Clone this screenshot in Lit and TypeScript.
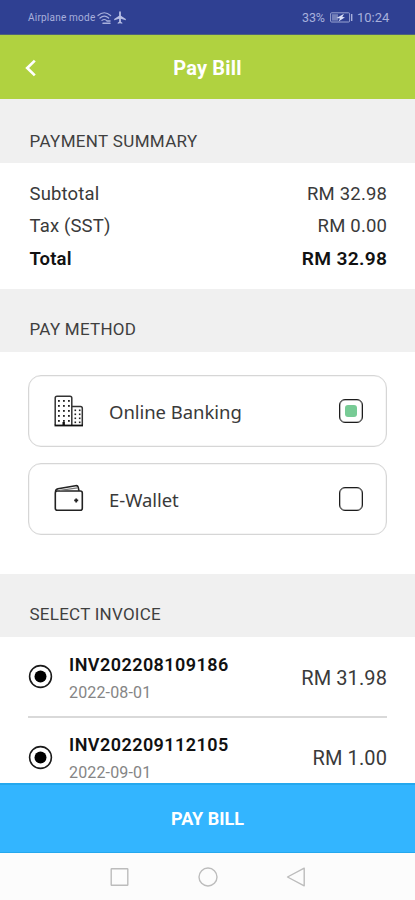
import { LitElement, html, svg, css } from "lit";

class AppRoot extends LitElement {
  static styles = css`
    :host { display: flex; flex-direction: column; height: 900px; width: 415px; overflow: hidden; background: #fff; font-family: Roboto, "Liberation Sans", sans-serif; color: #3a3a3a; }
    * { box-sizing: border-box; }
    svg { display: block; flex: none; fill: none; }
    .status { height: 35px; flex: none; background: #2f4092; color: #a8b0dc; display: flex; align-items: center; padding: 1px 26px 0 28px; border-bottom: 1px solid #4e6378; }
    .mode { font-size: 10px; letter-spacing: 0.22px; width: 69px; white-space: nowrap; }
    .plane { margin-left: 2px; }
    .pct { margin-left: auto; font-size: 12.5px; width: 25px; letter-spacing: -0.1px; }
    .batt { margin: 0 4px 0 3px; }
    .clock { font-size: 13px; width: 32px; white-space: nowrap; }
    .bar { height: 64px; flex: none; background: #b0d240; display: grid; grid-template-columns: 60px 1fr 60px; align-items: center; padding-top: 2px; }
    .back { margin-left: 24px; }
    .title { color: #fff; font-size: 20px; font-weight: 700; text-align: center; letter-spacing: 0.2px; }
    .head { height: 64px; flex: none; background: #f0f0f0; padding: 32px 29.5px 0; font-size: 17px; line-height: 20px; color: #3f3f3f; letter-spacing: 0.35px; }
    .head.short { height: 63px; padding-top: 30px; letter-spacing: 0.25px; }
    .sum { height: 126px; flex: none; padding: 15px 28px 0 29.5px; }
    .line { display: flex; justify-content: space-between; height: 32.3px; line-height: 32px; font-size: 18.5px; }
    .ls { letter-spacing: 0.15px; }
    .val { letter-spacing: 0.2px; margin-right: -0.2px; }
    .line.total { font-weight: 600; color: #111; }
    .total .val { letter-spacing: 0.3px; font-size: 19.2px; }
    .methods { height: 222px; flex: none; padding: 23px 28px 0 28px; display: flex; flex-direction: column; gap: 16px; }
    .card { height: 72px; border: 1.5px solid #d6d6d6; box-shadow: inset 0 0 0 0.5px #ececec; border-radius: 13px; display: flex; align-items: center; padding: 0 23px 0 25px; }
    .name { font-family: "Noto Sans", sans-serif; font-size: 18.5px; line-height: 26px; margin: 1px 0 0 25px; flex: 1; letter-spacing: -0.05px; }
    .box { width: 24px; height: 24px; border: 1.5px solid #1d1d1d; box-shadow: inset 0 0 0 0.5px #777; border-radius: 6px; display: flex; align-items: center; justify-content: center; }
    .mark { width: 12px; height: 12px; border-radius: 3px; background: #77cb95; }
    .list { flex: 1; min-height: 0; overflow: hidden; padding: 0 28px; }
    .inv { height: 80.5px; border-bottom: 2px solid #d9d9d9; display: flex; align-items: center; }
    .info { margin: 3.5px 0 0 16px; flex: 1; }
    .no { font-size: 18px; font-weight: 600; line-height: 22px; color: #111; letter-spacing: 0.45px; }
    .date { font-size: 16px; line-height: 20px; margin-top: 7px; color: #858585; letter-spacing: 0.15px; }
    .amt { font-size: 20px; letter-spacing: 0.1px; margin-top: 3px; }
    .radio { margin-top: 1px; }
    .pay { height: 70px; flex: none; background: #33b5ff; border-top: 2px solid #24a8ee; border-bottom: 1px solid #24a8ee; color: #fff; font-size: 18px; font-weight: 700; display: flex; align-items: center; justify-content: center; }
    .nav { height: 47px; flex: none; background: #fcfcfc; display: flex; justify-content: center; align-items: center; gap: 68px; padding-top: 1px; }
  `;

  line(label: string, value: string, total = false) {
    return html`<div class="line ${total ? "total" : ""}"><span class="ls">${label}</span><span class="val">${value}</span></div>`;
  }

  bank() {
    const dots = [];
    for (let y = 0; y < 5; y++) for (let x = 0; x < 3; x++) dots.push(svg`<rect x=${4 + x * 5} y=${5 + y * 5} width="1.8" height="1.8"></rect>`);
    for (let y = 0; y < 4; y++) for (let x = 0; x < 2; x++) dots.push(svg`<rect x=${20.5 + x * 4.4} y=${14.5 + y * 4} width="1.6" height="1.6"></rect>`);
    return html`<svg width="30" height="32" viewBox="0 0 30 32">
      <path d="M1.2 30V3q0-1.8 1.8-1.8H16q1.8 0 1.8 1.8V30M18 11.5h8.5q1.8 0 1.8 1.8V30" stroke="#333" stroke-width="1.5"/>
      <path d="M.5 30.5H29" stroke="#111" stroke-width="1.8"/><path d="M8.5 30v-3h2.4v3z" fill="#111"/><g fill="#222">${dots}</g></svg>`;
  }

  wallet() {
    return html`<svg width="30" height="32" viewBox="0 0 30 32" stroke="#222" stroke-width="1.6" stroke-linejoin="round">
      <rect x="1.3" y="8" width="27" height="19.2" rx="2"/><path d="M1.6 8.7Q1.5 6.4 4 5.8L21.5 2.7q2.2-.4 2.7 1.6l.8 3.6"/><path d="M6 7.4l17.5-2.6" stroke="#777" stroke-width="1.2"/>
      <path d="M22.2 15.4v4M20.2 17.4h4" stroke-width="1.8"/></svg>`;
  }

  card(icon: unknown, name: string, on: boolean) {
    return html`<div class="card">${icon}<span class="name">${name}</span><span class="box">${on ? html`<span class="mark"></span>` : ""}</span></div>`;
  }

  invoice(no: string, date: string, amt: string) {
    return html`<div class="inv">
      <svg class="radio" width="25" height="25" viewBox="0 0 25 25"><circle cx="12.5" cy="12.5" r="10.9" stroke="#1a1a1a" stroke-width="1.6"/><circle cx="12.5" cy="12.5" r="6" fill="#000"/></svg>
      <div class="info"><div class="no">${no}</div><div class="date">${date}</div></div><span class="amt">${amt}</span></div>`;
  }

  render() {
    return html`
      <div class="status">
        <span class="mode">Airplane mode</span>
        <svg width="15" height="14" viewBox="0 0 15 14" stroke="#a8b0dc" stroke-width="1.2" stroke-linecap="round"><path d="M1 4.5Q7.2-1 13.6 4.5M3 7q4.3-3.6 8.6 0M5 9.4q2.2-1.8 4.5 0"/><path d="M6 12.2h7M10 10h3" stroke-width="1.5"/></svg>
        <svg class="plane" width="12" height="13" viewBox="0 0 12 13"><path d="M6 .3q.9 0 .9 1.2v3.2L11.8 8v1.2L6.9 7.8v2.9l1.4 1.1v.9L6 12.2l-2.3.5v-.9l1.4-1.1V7.8L.2 9.2V8l4.9-3.3V1.5Q5.1.3 6 .3z" fill="#b7bee4"/></svg>
        <span class="pct">33%</span>
        <svg class="batt" width="23" height="11" viewBox="0 0 23 11"><rect x=".6" y=".8" width="19" height="9.2" rx="1" stroke="#99a3d2"/><rect x="2" y="2.2" width="6" height="6.4" fill="#7480b9"/><path d="M6.5 6 14 1.7 12.3 5 15 5.2 8.5 9.6 10 6.4z" fill="#dadff5"/><path d="M21.7 2v7" stroke="#a8b0dc" stroke-width="1.4"/></svg>
        <span class="clock">10:24</span>
      </div>
      <div class="bar">
        <svg class="back" width="13" height="18" viewBox="0 0 13 18"><path d="M10.8 1.6 3.2 9l7.6 7.4" stroke="#fff" stroke-width="2.7"/></svg>
        <span class="title">Pay Bill</span>
      </div>
      <div class="head">PAYMENT SUMMARY</div>
      <div class="sum">${this.line("Subtotal", "RM 32.98")}${this.line("Tax (SST)", "RM 0.00")}${this.line("Total", "RM 32.98", true)}</div>
      <div class="head short">PAY METHOD</div>
      <div class="methods">${this.card(this.bank(), "Online Banking", true)}${this.card(this.wallet(), "E-Wallet", false)}</div>
      <div class="head short">SELECT INVOICE</div>
      <div class="list">${this.invoice("INV202208109186", "2022-08-01", "RM 31.98")}${this.invoice("INV202209112105", "2022-09-01", "RM 1.00")}</div>
      <div class="pay">PAY BILL</div>
      <div class="nav">
        <svg width="20" height="20" viewBox="0 0 20 20" stroke="#bcbcbc" stroke-width="1.4"><rect x="1.2" y="1.7" width="16.6" height="16.6" rx=".5"/></svg>
        <svg width="20" height="20" viewBox="0 0 20 20" stroke="#bcbcbc" stroke-width="1.4"><circle cx="10" cy="10" r="9"/></svg>
        <svg width="20" height="20" viewBox="0 0 20 20" stroke="#bcbcbc" stroke-width="1.4" stroke-linejoin="round"><path d="M18.2 1.2v17.6L1.5 10z"/></svg>
      </div>`;
  }
}
customElements.define("app-root", AppRoot);
